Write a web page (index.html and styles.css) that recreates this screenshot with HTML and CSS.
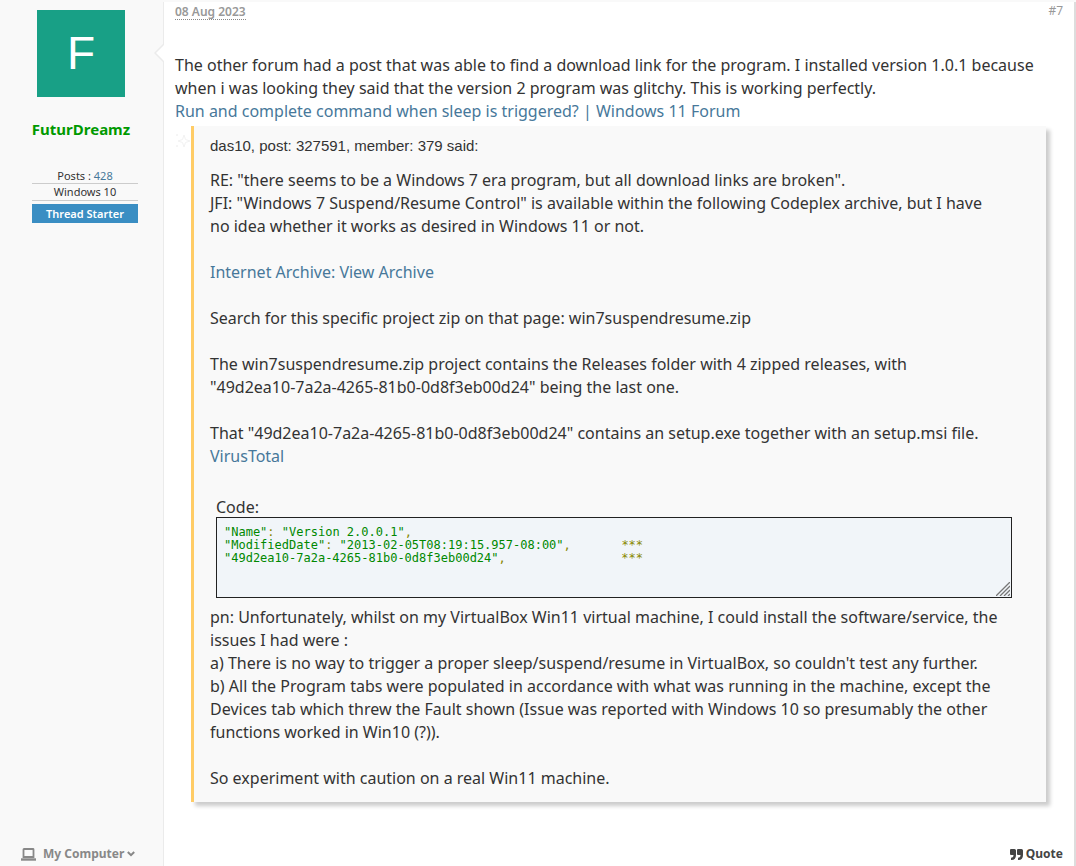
FILE: index.html
```
<!DOCTYPE html>
<html lang="en">
<head>
<meta charset="utf-8">
<title>Forum post #7</title>
<link rel="stylesheet" href="styles.css">
</head>
<body>
<article class="message">
  <aside class="user">
    <div class="identity">
      <a class="avatar" href="#user" aria-label="FuturDreamz profile">F</a>
      <a class="username" href="#user">FuturDreamz</a>
    </div>
    <div class="stats">
      <div class="stat">Posts : <a href="#posts">428</a></div>
      <div class="stat">Windows 10</div>
      <div class="starter">Thread Starter</div>
    </div>
    <button class="computer" type="button">
      <svg width="15" height="13" viewBox="0 0 15 13" fill="none" stroke="currentColor"><path d="M3 1H12Q12.500 1 12.500 1.500V9H2.500V1.500Q2.500 1 3 1Z" stroke-width="1.800"/><path d="M0 11.500H15" stroke-width="2.400"/></svg>
      <span>My Computer</span>
      <svg class="chevron" width="8" height="6" viewBox="0 0 8 6" fill="none" stroke="currentColor" stroke-width="2"><path d="M.8 1 4 4.200 7.200 1"/></svg>
    </button>
  </aside>
  <section class="main">
    <svg class="pointer" width="10" height="20" viewBox="0 0 10 20"><path d="M10 1 1 10 10 19Z" fill="#fff"/><path d="M10 1 1 10 10 19" fill="none" stroke="#ebebeb" stroke-width="1.500"/></svg>
    <header class="top">
      <a class="date" href="#post7"><time datetime="2023-08-08">08 Aug 2023</time></a>
      <a class="number" href="#post7">#7</a>
    </header>
    <div class="content">
      <p>The other forum had a post that was able to find a download link for the program. I installed version 1.0.1 because<br>when i was looking they said that the version 2 program was glitchy. This is working perfectly.<br><a href="#thread">Run and complete command when sleep is triggered? | Windows 11 Forum</a></p>
      <blockquote class="quote">
        <svg class="sparkle" width="16" height="16" viewBox="0 0 16 16" fill="none" stroke="#f2f2f2"><path d="M9 2 10.500 6.500 15 8 10.500 9.500 9 14 7.500 9.500 3 8 7.500 6.500Z"/><path d="M1 2H3M2 1V3M1 13H3M2 12V14"/></svg>
        <div class="said">das10, post: 327591, member: 379 said:</div>
        <p>RE: "there seems to be a Windows 7 era program, but all download links are broken".<br>JFI: "Windows 7 Suspend/Resume Control" is available within the following Codeplex archive, but I have<br>no idea whether it works as desired in Windows 11 or not.</p>
        <p><a href="#archive">Internet Archive: View Archive</a></p>
        <p>Search for this specific project zip on that page: win7suspendresume.zip</p>
        <p>The win7suspendresume.zip project contains the Releases folder with 4 zipped releases, with<br>"49d2ea10-7a2a-4265-81b0-0d8f3eb00d24" being the last one.</p>
        <p>That "49d2ea10-7a2a-4265-81b0-0d8f3eb00d24" contains an setup.exe together with an setup.msi file.<br><a href="#virustotal">VirusTotal</a></p>
        <div class="code">
          <div class="label">Code:</div>
          <div class="box">
            <pre><b>"Name"</b>: <b>"Version 2.0.0.1"</b>,
<b>"ModifiedDate"</b>: <b>"2013-02-05T08:19:15.957-08:00"</b>,       ***
<b>"49d2ea10-7a2a-4265-81b0-0d8f3eb00d24"</b>,                ***</pre>
            <svg class="grip" width="14" height="14" viewBox="0 0 14 14" stroke="#777" stroke-width="1.300"><path d="M0 14 14 0M4 14 14 4M8 14 14 8M12 14 14 12"/></svg>
          </div>
        </div>
        <p>pn: Unfortunately, whilst on my VirtualBox Win11 virtual machine, I could install the software/service, the<br>issues I had were :<br>a) There is no way to trigger a proper sleep/suspend/resume in VirtualBox, so couldn't test any further.<br>b) All the Program tabs were populated in accordance with what was running in the machine, except the<br>Devices tab which threw the Fault shown (Issue was reported with Windows 10 so presumably the other<br>functions worked in Win10 (?)).</p>
        <p>So experiment with caution on a real Win11 machine.</p>
      </blockquote>
    </div>
    <footer class="actions">
      <button class="reply" type="button">
        <svg width="13" height="11" viewBox="0 0 13 11" fill="currentColor"><path d="M1 0H4.500Q6 0 6 1.500V6Q6 11 1.500 11H1V8.700Q3.500 8.700 3.500 6H1Q0 6 0 5V1Q0 0 1 0Z"/><path d="M8 0H11.500Q13 0 13 1.500V6Q13 11 8.500 11H8V8.700Q10.500 8.700 10.500 6H8Q7 6 7 5V1Q7 0 8 0Z"/></svg>
        <span>Quote</span>
      </button>
    </footer>
  </section>
</article>
</body>
</html>
```
FILE: styles.css
```
* { box-sizing: border-box; }
body { margin: 0; background: #f9f9f9; color: #333; font: 16px/23px "Noto Sans", sans-serif; }
a { color: #47789a; text-decoration: none; }
p { margin: 0; }
button { border: 0; padding: 0; background: none; cursor: pointer; font: bold 12px/16px "Noto Sans", sans-serif; display: flex; align-items: center; }

.message { display: flex; min-height: 100vh; padding-top: 2px; }
.user { flex: 0 0 163px; display: flex; flex-direction: column; padding: 8px 0 4px; }
.identity { width: 162px; display: flex; flex-direction: column; align-items: center; }
.avatar { width: 88px; height: 87px; background: #18a086; color: #fff; font: 46px/86px "Liberation Sans", sans-serif; text-align: center; }
.username { margin-top: 21px; color: #090; font-weight: bold; font-size: 15px; }
.stats { width: 106px; margin: 28px 0 0 32px; font-size: 11px; line-height: 16px; text-align: center; }
.stat { border-bottom: 1px solid #ccc; }
.stat:first-child { line-height: 14px; }
.starter { margin-top: 3px; background: #3a8ec3; color: #fff; line-height: 19px; font-weight: 600; }
.computer { margin-top: auto; align-self: flex-start; margin-left: 21px; gap: 7px; color: #888; }
.chevron { margin-left: -4px; }

.main { position: relative; flex: 1; min-width: 0; display: flex; flex-direction: column; background: #fff; border-left: 1px solid #ebebeb; border-right: 2px solid #ddd; padding: 0 11px 4px; }
.pointer { position: absolute; left: -10px; top: 41px; }
.top { display: flex; justify-content: space-between; font-size: 12px; line-height: 18px; }
.top a { color: #999; }
.top .date { line-height: 15px; align-self: flex-start; margin-top: 2px; font-weight: 600; border-bottom: 1px dotted #888; }
.content { padding-top: 34px; }
.quote { position: relative; margin: 3px 17px 0 16px; padding: 8px 34px 12px 16px; border-left: 3px solid #fc6; background: #f9f9f9; box-shadow: 4px 4px 4px #ccc; }
.quote > p + p { margin-top: 23px; }
.sparkle { position: absolute; left: -19px; top: 7px; }
.said { margin-bottom: 12px; font: 15px/23px "Liberation Sans", sans-serif; }
.code { margin: 29px 0 8px 6px; }
.label { line-height: 20px; }
.box { position: relative; height: 81px; border: 1px solid #222; background: #f1f5f9; padding: 8px 7px; overflow: hidden; }
.box pre { margin: 0; font: 12px/13px "DejaVu Sans Mono", monospace; color: #880; }
.box b { font-weight: normal; color: #080; }
.grip { position: absolute; right: 1px; bottom: 1px; }
.actions { margin-top: auto; display: flex; justify-content: flex-end; }
.reply { gap: 3px; color: #444; }
```
